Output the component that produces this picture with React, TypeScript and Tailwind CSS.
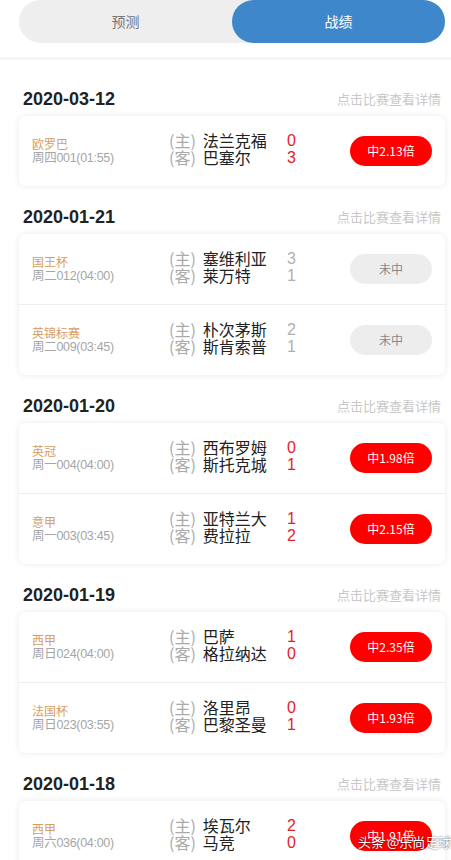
import { Fragment } from "react";

type Match = {
  league: string;
  time: string;
  home: string;
  away: string;
  hs: number;
  as: number;
  result: string | null;
};

type Day = { date: string; matches: Match[] };

const days: Day[] = [
  {
    date: "2020-03-12",
    matches: [
      { league: "欧罗巴", time: "周四001(01:55)", home: "法兰克福", away: "巴塞尔", hs: 0, as: 3, result: "中2.13倍" },
    ],
  },
  {
    date: "2020-01-21",
    matches: [
      { league: "国王杯", time: "周二012(04:00)", home: "塞维利亚", away: "莱万特", hs: 3, as: 1, result: null },
      { league: "英锦标赛", time: "周二009(03:45)", home: "朴次茅斯", away: "斯肯索普", hs: 2, as: 1, result: null },
    ],
  },
  {
    date: "2020-01-20",
    matches: [
      { league: "英冠", time: "周一004(04:00)", home: "西布罗姆", away: "斯托克城", hs: 0, as: 1, result: "中1.98倍" },
      { league: "意甲", time: "周一003(03:45)", home: "亚特兰大", away: "费拉拉", hs: 1, as: 2, result: "中2.15倍" },
    ],
  },
  {
    date: "2020-01-19",
    matches: [
      { league: "西甲", time: "周日024(04:00)", home: "巴萨", away: "格拉纳达", hs: 1, as: 0, result: "中2.35倍" },
      { league: "法国杯", time: "周日023(03:55)", home: "洛里昂", away: "巴黎圣曼", hs: 0, as: 1, result: "中1.93倍" },
    ],
  },
  {
    date: "2020-01-18",
    matches: [
      { league: "西甲", time: "周六036(04:00)", home: "埃瓦尔", away: "马竞", hs: 2, as: 0, result: "中1.91倍" },
    ],
  },
];

const cjk = "font-['Noto_Sans_CJK_SC','Liberation_Sans',sans-serif]";

function MatchRow({ m }: { m: Match }) {
  const hit = m.result !== null;
  return (
    <div className="flex h-[70px] items-center px-[13px]">
      <div className="flex w-[137px] shrink-0 flex-col leading-[15px]">
        <span className="text-[12px] text-[#d69d63]">{m.league}</span>
        <span className="text-[12.5px] text-[#a6a6a6] font-['Liberation_Sans','Noto_Sans_CJK_SC',sans-serif] tracking-[-0.3px]">{m.time}</span>
      </div>
      <div className="flex w-[118px] shrink-0 flex-col text-[16px] leading-[17px] mt-[-4px]">
        <div className="flex items-center gap-[7px]">
          <span className="text-[#aaaaaa]">(主)</span>
          <span className="text-[#222222]">{m.home}</span>
        </div>
        <div className="flex items-center gap-[7px]">
          <span className="text-[#aaaaaa]">(客)</span>
          <span className="text-[#222222]">{m.away}</span>
        </div>
      </div>
      <div className={`flex w-[20px] flex-col text-[16px] leading-[17px] mt-[-4px] font-['Liberation_Sans',sans-serif] ${hit ? "text-[#e6212a]" : "text-[#b0b0b0]"}`}>
        <span>{m.hs}</span>
        <span>{m.as}</span>
      </div>
      <div className="ml-auto">
        {hit ? (
          <div className="flex h-[30px] w-[82px] items-center justify-center rounded-full bg-[#ff0000] text-[12px] text-white">
            {m.result}
          </div>
        ) : (
          <div className="flex h-[30px] w-[82px] items-center justify-center rounded-full bg-[#ededed] text-[12px] text-[#888888]">
            未中
          </div>
        )}
      </div>
    </div>
  );
}

export default function App() {
  return (
    <div className={`relative h-[860px] overflow-hidden bg-white ${cjk}`}>
      <div className="pl-[19px] pr-[6px]">
        <div className="flex h-[43px] rounded-full bg-[#eeeeee]">
          <div className="flex flex-1 items-center justify-center text-[14px] text-[#777777]">预测</div>
          <div className="flex w-[213px] items-center justify-center rounded-full bg-[#3f87cb] text-[14px] text-white">战绩</div>
        </div>
      </div>
      <div className="mt-[14px] h-[3px] bg-[#f5f5f5]" />
      <div className="pt-[22px] pl-[19px] pr-[6px]">
        {days.map((d) => (
          <section key={d.date} className="mb-[14px]">
            <div className="flex h-[34px] items-center justify-between px-[4px]">
              <span className="font-['Liberation_Sans',sans-serif] text-[18px] font-bold text-[#222222]">{d.date}</span>
              <span className="text-[13px] text-[#c8c8c8]">点击比赛查看详情</span>
            </div>
            <div className="rounded-[6px] bg-white shadow-[0_0_6px_rgba(0,0,0,0.09)]">
              {d.matches.map((m, i) => (
                <Fragment key={m.home}>
                  {i > 0 && <div className="h-px bg-[#eeeeee]" />}
                  <MatchRow m={m} />
                </Fragment>
              ))}
            </div>
          </section>
        ))}
      </div>
      <div className="absolute left-[358px] top-[833px] whitespace-nowrap text-[13px] leading-[18px] text-white [text-shadow:0_0_2px_rgba(0,0,0,0.8)]">
        头条 @乐尚足球
      </div>
    </div>
  );
}
